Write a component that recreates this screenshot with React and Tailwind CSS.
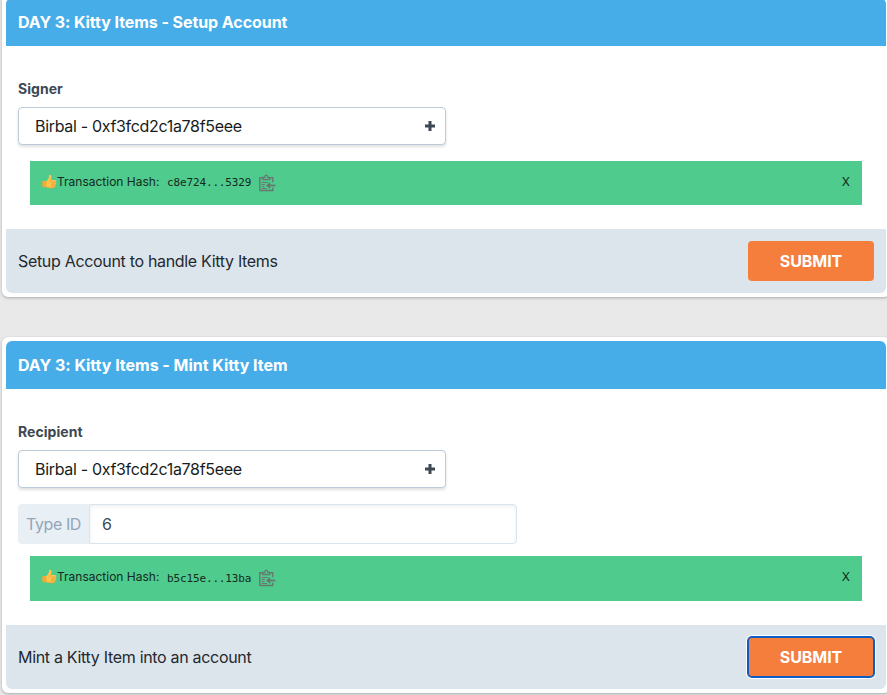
function ThumbsUp() {
  return (
    <svg width="15" height="15" viewBox="0 0 15 15" className="block shrink-0">
      <path d="M.3 8.200c0-1 .6-1.300 1.500-1.300h3.400v6.300H2.500C1 13.200.3 12.600.3 11.700z" fill="#f5a833" />
      <path d="M4.300 7.100C5.600 6 6.700 4.700 6.900 2.900 7 1.500 7.300.7 8.200.8c1.200.1 1.500 1.500 1.300 2.700L9.100 6h3.800c1.500 0 1.900 1.700.7 2.200.9.6.8 1.600-.2 2 .6.7.3 1.600-.6 1.800.3.900-.2 1.700-1.200 1.800-2.200.4-5.400.2-7.300-.8z" fill="#fec34d" />
      <path d="M9.600 8.200h3.800M9.400 10.200h3.700M9.400 12h3.200" stroke="#e58d2b" strokeWidth=".65" fill="none" strokeLinecap="round" />
      <path d="M5.200 13.100c1.900.9 4.700 1.100 6.600.6M9.100 6c-.9.500-1.400 1.200-1.500 2" stroke="#e9942f" strokeWidth=".6" fill="none" />
    </svg>
  );
}

function ClipboardCopy() {
  return (
    <svg width="18" height="18" viewBox="0 0 18 18" fill="none" stroke="#68786f" className="block shrink-0">
      <path d="M4.500 3.800H1.800v12.700h13v-2.800M11.500 3.800h3.300v4.400" strokeWidth="1.400" strokeLinejoin="round" />
      <path d="M4.800 5.500V3.300h1.900C6.800 1.700 7.400 1.100 8.200 1.100s1.400.6 1.500 2.200h1.900v2.200z" strokeWidth="1.300" />
      <path d="M3.600 8.500h6.400M3.600 10.500h3.200M3.600 12.500h2.900M3.600 14.500h5.400" strokeWidth="1" />
      <path d="M17.300 11.500H10.500" strokeWidth="1.800" />
      <path d="M12.200 8v7L8 11.500z" fill="#68786f" stroke="none" />
    </svg>
  );
}

function AccountSelect({ label }) {
  return (
    <div>
      <div className="h-7 text-sm font-bold leading-5 tracking-[0.05px] text-[#3d4852]">{label}</div>
      <div className="flex h-[38px] w-[428px] items-center justify-between rounded border border-[#bccbd9] bg-white pr-[10px] pl-4 shadow-[0_2px_3px_rgba(0,0,0,0.12)]">
        <span className="text-base tracking-[-0.32px] text-[#181c20]">Birbal - 0xf3fcd2c1a78f5eee</span>
        <svg width="10" height="10" viewBox="0 0 10 10" className="block">
          <path d="M3.500 0h3v3.500H10v3H6.500V10h-3V6.500H0v-3h3.500z" fill="#3d4852" />
        </svg>
      </div>
    </div>
  );
}

function Banner({ hash, className, hashClass }) {
  return (
    <div className={"mx-3 flex items-start bg-[#4fcb8d] px-3 text-[12px] leading-4 text-[#142a20] " + className}>
      <div className="mt-[13px] w-[15px]">
        <ThumbsUp />
      </div>
      <span className="mt-[13px] w-[110px] whitespace-nowrap">Transaction Hash:</span>
      <span className={"w-[91px] font-['DejaVu_Sans_Mono',monospace] text-[11px] tracking-[-0.14px] whitespace-nowrap " + hashClass}>{hash}</span>
      <div className="mt-[13px]">
        <ClipboardCopy />
      </div>
      <span className="mt-[13px] ml-auto">X</span>
    </div>
  );
}

function Card({ title, titleClass, description, descriptionClass, buttonClass, className, children }) {
  return (
    <section className={"ml-0.5 w-[888px] rounded-md border-4 border-white bg-white shadow-[0_1px_3px_rgba(0,0,0,0.28)] " + className}>
      <h2 className={"flex h-12 items-center rounded-t-md bg-[#47ade8] px-3 text-base font-bold text-white " + titleClass}>{title}</h2>
      <div className="px-3 pt-[33px] pb-6">{children}</div>
      <footer className="flex h-16 items-center justify-between rounded-b-md bg-[#dde5ec] px-3">
        <span className={"text-base text-[#22292f] " + descriptionClass}>{description}</span>
        <button className={"h-10 w-[126px] rounded bg-[#f57e3d] text-base font-bold tracking-[-0.1px] text-white " + buttonClass}>SUBMIT</button>
      </footer>
    </section>
  );
}

export default function App() {
  return (
    <main className="h-[695px] w-[887px] overflow-hidden bg-[#e9e9e9] font-['Inter',sans-serif]">
      <Card
        className="-mt-1.5"
        title="DAY 3: Kitty Items - Setup Account"
        titleClass="tracking-[-0.07px]"
        description="Setup Account to handle Kitty Items"
        descriptionClass="tracking-[-0.32px]"
        buttonClass=""
      >
        <AccountSelect label="Signer" />
        <Banner hash="c8e724...5329" className="mt-4 h-11" hashClass="mt-[14px]" />
      </Card>
      <Card
        className="mt-10"
        title="DAY 3: Kitty Items - Mint Kitty Item"
        titleClass="tracking-[-0.02px]"
        description="Mint a Kitty Item into an account"
        descriptionClass="tracking-[-0.31px]"
        buttonClass="shadow-[inset_0_0_0_1px_#0b5cc4,0_0_0_1px_#0b5cc4,0_0_0_2px_#fff]"
      >
        <AccountSelect label="Recipient" />
        <div className="mt-4 flex h-10 w-[499px] text-base">
          <span className="flex w-[71px] items-center rounded-l bg-[#e8eff5] pl-2 whitespace-nowrap tracking-[-0.4px] text-[#94a5b8]">Type ID</span>
          <span className="flex flex-1 items-center rounded-r border border-[#dae4ec] bg-white pl-3 text-[#3d4852] shadow-[inset_0_2px_4px_rgba(0,0,0,0.06)]">6</span>
        </div>
        <Banner hash="b5c15e...13ba" className="mt-3 h-[45px]" hashClass="mt-[15px]" />
      </Card>
    </main>
  );
}
